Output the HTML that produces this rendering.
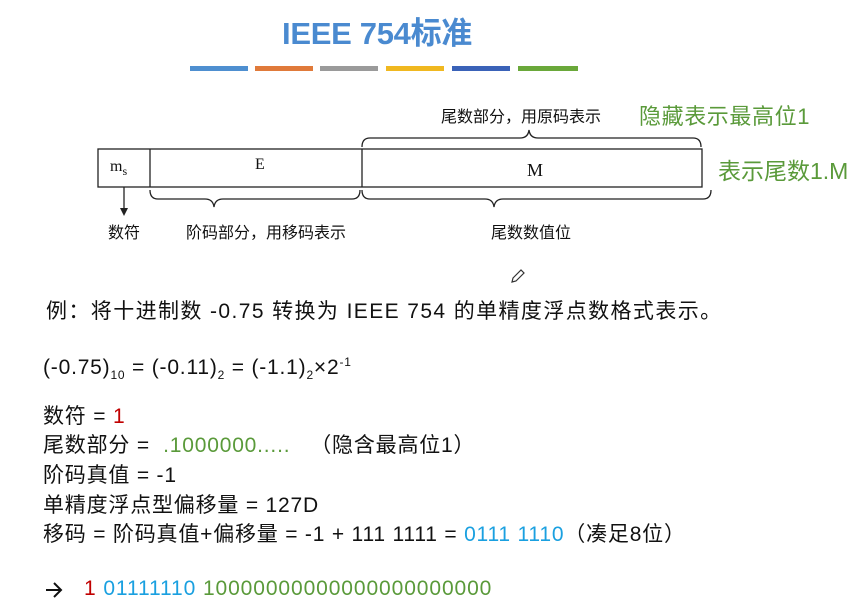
<!DOCTYPE html>
<html><head><meta charset="utf-8"><style>
body{margin:0;width:867px;height:607px;background:#fff;position:relative;overflow:hidden;font-family:"Liberation Sans","Noto Sans CJK SC",sans-serif;color:#111}
.a{position:absolute;white-space:nowrap}
.t{font-size:21px;letter-spacing:0.8px}
.s{font-family:"Liberation Serif","Noto Serif CJK SC",serif;font-size:16px}
.g{color:#5a9a3a}.r{color:#c00000}.b{color:#1aa0e0}
sub,sup{font-size:12px}
</style></head><body>
<div class="a" style="left:282px;top:8px;font-size:31px;font-weight:bold;color:#4a8ad0;letter-spacing:-0.3px">IEEE 754标准</div>
<div class="a" style="left:190px;top:66px;width:58px;height:5px;background:#4e8fd0"></div>
<div class="a" style="left:255px;top:66px;width:58px;height:5px;background:#e07a3a"></div>
<div class="a" style="left:320px;top:66px;width:58px;height:5px;background:#9a9a9a"></div>
<div class="a" style="left:386px;top:66px;width:58px;height:5px;background:#f0b820"></div>
<div class="a" style="left:452px;top:66px;width:58px;height:5px;background:#3a62b8"></div>
<div class="a" style="left:518px;top:66px;width:60px;height:5px;background:#6aa83a"></div>
<svg class="a" style="left:0;top:0" width="867" height="607">
<g fill="none" stroke="#222" stroke-width="1.3">
<rect x="98" y="149" width="604" height="38"/>
<line x1="150" y1="149" x2="150" y2="187"/>
<line x1="362" y1="149" x2="362" y2="187"/>
<path d="M362,147 q0,-9 8,-9 h150 q8,0 9,-8 q1,8 9,8 h155 q8,0 8,9"/>
<path d="M150,190 q0,9 8,9 h47 q8,0 9,8 q1,-8 9,-8 h129 q8,0 8,-9"/>
<path d="M362,190 q0,9 8,9 h115 q8,0 9,8 q1,-8 9,-8 h200 q8,0 8,-9"/>
<line x1="124" y1="187" x2="124" y2="210"/>
</g>
<path d="M120,208 l4,8 l4,-8z" fill="#222"/>
<path d="M513,278 l8,-8 l3,3 l-8,8 l-4,1z" fill="none" stroke="#333" stroke-width="1.2"/>
<path d="M46,590 h14 M54,583 l7,7 l-7,7" fill="none" stroke="#111" stroke-width="2"/>
</svg>
<div class="a s" style="left:110px;top:158px">m<sub>s</sub></div>
<div class="a s" style="left:255px;top:156px">E</div>
<div class="a s" style="left:527px;top:160px;font-size:18px">M</div>
<div class="a" style="left:441px;top:103px;font-size:16px">尾数部分，用原码表示</div>
<div class="a g" style="left:639px;top:99px;font-size:22px;letter-spacing:0.6px">隐藏表示最高位1</div>
<div class="a g" style="left:718px;top:152px;font-size:23px">表示尾数1.M</div>
<div class="a" style="left:108px;top:219px;font-size:16px">数符</div>
<div class="a" style="left:186px;top:219px;font-size:16px">阶码部分，用移码表示</div>
<div class="a" style="left:491px;top:219px;font-size:16px">尾数数值位</div>
<div class="a t" style="left:46px;top:295px;letter-spacing:1.4px">例：将十进制数 -0.75 转换为 IEEE 754 的单精度浮点数格式表示。</div>
<div class="a t" style="left:43px;top:355px">(-0.75)<sub>10</sub> = (-0.11)<sub>2</sub> = (-1.1)<sub>2</sub>×2<sup>-1</sup></div>
<div class="a t" style="left:43px;top:400px">数符 = <span class="r">1</span></div>
<div class="a t" style="left:43px;top:429px">尾数部分 =&nbsp; <span class="g">.1000000.....</span> &nbsp;&nbsp;（隐含最高位1）</div>
<div class="a t" style="left:43px;top:459px">阶码真值 = -1</div>
<div class="a t" style="left:43px;top:489px">单精度浮点型偏移量 = 127D</div>
<div class="a t" style="left:43px;top:518px">移码 = 阶码真值+偏移量 = -1 + 111 1111 = <span class="b">0111 1110</span>（凑足8位）</div>
<div class="a t" style="left:84px;top:577px;letter-spacing:0.9px"><span class="r">1</span> <span class="b">01111110</span> <span class="g">10000000000000000000000</span></div>
</body></html>
